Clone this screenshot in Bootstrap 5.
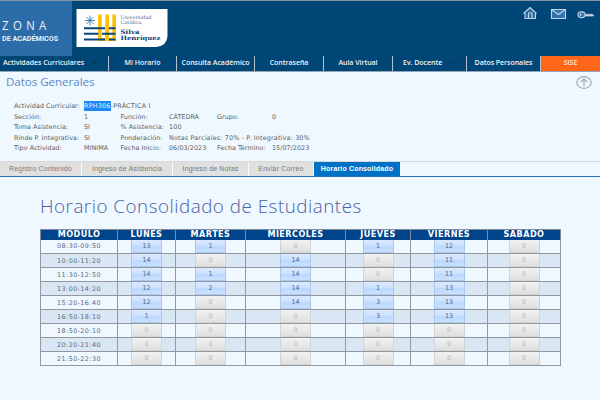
<!DOCTYPE html>
<html lang="es">
<head>
<meta charset="utf-8">
<meta name="viewport" content="width=device-width, initial-scale=1">
<title>Zona de Académicos</title>
<link href="https://cdn.jsdelivr.net/npm/bootstrap@5.3.0/dist/css/bootstrap.min.css" rel="stylesheet">
<style>
body{background:#eff7ff;font-family:"Open Sans","Noto Sans",sans-serif;width:600px;height:400px;overflow:hidden;line-height:1}
.topbar{height:56px;background:#004677;border-top:1px solid #8195a6}
.zona{width:72px;height:55px;background:#2c6ca8;color:#e9f2fa;padding:18px 0 0 2px}
.zona-a{font-size:12px;letter-spacing:4.6px;line-height:14px;white-space:nowrap;transform:scaleX(.95);transform-origin:0 0}
.zona-b{font-family:Roboto,sans-serif;font-weight:700;font-size:8px;line-height:9px;margin-top:1px;white-space:nowrap;transform:scaleX(.9);transform-origin:0 0}
.crest{margin:8px 0 0 4px;width:92px;height:38px}
.tools{padding:5px 5px 0 0}
.menu{height:16px;background:#004677;border-bottom:1px solid #93a5b6;display:grid;grid-template-columns:109px 68px 78px 69px 69px 74px 74px 59px;font-size:7px;font-weight:600;letter-spacing:-.03px}
.menu a{color:#eef4f9;text-decoration:none;white-space:nowrap;border-right:1px solid #b5c2ce;padding-bottom:2px}
.menu a.sise{background:#ff661a;border:0;color:#ffe9dc}
.menu a.m1{padding-left:3px}
.menu a.m6{padding-left:10px}
.tri{width:0;height:0;border:2px solid transparent;border-top:2px solid #1f2c38;border-bottom:0;margin-right:11px}
.sec{height:28px;padding:0 8px 0 6px;color:#5a8cc6}
.sec h2{font-size:11.6px;font-weight:400;letter-spacing:-.05px;margin:3px 0 0;line-height:14px}
.info{height:61px;padding:1px 0 0 14px;font-family:"DejaVu Sans",sans-serif;font-size:6.4px;letter-spacing:.04px;color:#5b5f66;display:grid;grid-template-columns:70px 36.5px 48.5px 48px 55px 1fr;grid-auto-rows:10.5px;align-items:center;white-space:nowrap;align-content:start}
.info .w5{grid-column:span 5;letter-spacing:.22px}.info .w3{grid-column:span 3;letter-spacing:.17px}
.sel{background:#1e88f5;color:#e4f2ff;padding:1px 0}
.tabs{height:16px;border-bottom:1px solid #2f6fc0;border-top:1px solid #d5d9dc;font-family:"Liberation Sans",sans-serif;font-size:7px;color:#7b7b7b;letter-spacing:.16px}
.tabs div{background:#e0e0e0;border-right:1px solid #f8fbff;white-space:nowrap;height:14px;line-height:14px}
.tabs .on{background:#0072c6;color:#fff;font-weight:700;border:0}
.t1{width:82px}.t2{width:91px}.t3{width:76px}.t4{width:65px}.t5{width:86px}
.ttl{font-size:18px;font-weight:300;color:#4a62a3;letter-spacing:.5px;margin:17px 0 0 40px;line-height:24px;white-space:nowrap;transform:scaleX(1.043);transform-origin:0 0}
.sched{margin:11px 0 0 40px;width:520px;border-collapse:collapse;table-layout:fixed;font-family:"DejaVu Sans",sans-serif;font-size:6.4px;color:#5d6a7c;text-align:center}
.sched th{background:#00458c;color:#fff;font-weight:700;font-size:8.1px;height:10px;padding:0;line-height:9px;border:1px solid #7f8b99;border-width:1px 1px 0;letter-spacing:.45px}
.sched td{height:14px;padding:0;border:1px solid #9298a0;line-height:12px;vertical-align:middle}
.sched tr.alt td{background:#d9e7f4}
.sched td:first-child{letter-spacing:.43px}
.sched tr.r1 td{border-top-width:0}
.cell{width:31px;height:13px;line-height:12px;margin:0 auto;background:linear-gradient(#dbe9ff,#cde2ff 45%,#bcd8fe 55%,#cbe1ff);border:1px solid #a9c6ee;border-top:0;color:#52698b}
.cell.z{background:linear-gradient(#f1f1f1,#e9e9e9 50%,#dfdfdf);border-color:#d4d4d4;color:#b4b4b4}
</style>
<script src="https://cdn.jsdelivr.net/npm/bootstrap@5.3.0/dist/js/bootstrap.bundle.min.js"></script>
</head>
<body>
<header class="topbar d-flex">
  <div class="zona"><div class="zona-a">ZONA</div><div class="zona-b">DE ACADÉMICOS</div></div>
  <svg class="crest" viewBox="0 0 92 38">
    <path d="M.5 0H91.500V27Q91 37 80 38H.5Z" fill="#fff"/>
    <g fill="#fcc20a"><path d="M22 5.500h3.700v24H22zM29.300 5.500H33v24h-3.700zM36.300 5.500H40v24h-3.700z"/><path d="M22 29h18v3H22z"/></g>
    <g fill="#08457e"><path d="M8 18.300h21v2H8zM33 18.300h6.500v2H33zM8 23.800h14.500v2H8zM26 23.800h13.500v2H26zM8 29.500h21v2H8zM33 29.500h6.500v2H33z"/></g>
    <path d="M14 6.500v10M9 11.500h10M10.500 8l7 7M17.500 8l-7 7" stroke="#3c76a6" stroke-width=".9"/>
    <g font-family="DejaVu Serif,serif" fill="#3b6a93"><text x="44.500" y="9.700" font-size="4.900" textLength="31" lengthAdjust="spacingAndGlyphs">Universidad</text><text x="44.500" y="14.600" font-size="4.900" textLength="21" lengthAdjust="spacingAndGlyphs">Católica</text>
    <g font-weight="bold" fill="#0b3c6c"><text x="44.500" y="25.300" font-size="6" textLength="19" lengthAdjust="spacingAndGlyphs">Silva</text><text x="44.500" y="31" font-size="6" textLength="40" lengthAdjust="spacingAndGlyphs">Henríquez</text></g></g>
  </svg>
  <div class="tools d-flex ms-auto">
    <svg width="77" height="18" viewBox="518 6 77 18" fill="none" stroke="#c3d3e2" stroke-width="1.100">
      <path d="M523.500 13.500L530 7.500L536.500 13.500M525 12.500V18.500H535.500V12.500" fill="#2f6fa8"/><path d="M528.500 18V13H532V18" />
      <path d="M551.500 9.500H565.500V18.500H551.500Z" fill="#3274ae"/><path d="M551.500 9.500L558.500 14.500L565.500 9.500"/>
      <ellipse cx="581.500" cy="14.800" rx="3.500" ry="2.900" fill="#3274ae"/><path d="M585 14.300H592L594 15.500L592.500 16H585" fill="#c3d3e2" stroke-width=".7"/><circle cx="580.500" cy="14.800" r=".5"/>
    </svg>
  </div>
</header>
<nav class="menu">
  <a href="#" class="m1 d-flex align-items-center">Actividades Curriculares<i class="tri ms-auto"></i></a>
  <a href="#" class="d-flex align-items-center justify-content-center">Mi Horario</a>
  <a href="#" class="d-flex align-items-center justify-content-center">Consulta Académico</a>
  <a href="#" class="d-flex align-items-center justify-content-center">Contraseña</a>
  <a href="#" class="d-flex align-items-center justify-content-center">Aula Virtual</a>
  <a href="#" class="m6 d-flex align-items-center">Ev. Docente<i class="tri ms-auto"></i></a>
  <a href="#" class="d-flex align-items-center justify-content-center">Datos Personales</a>
  <a href="#" class="sise d-flex align-items-center justify-content-center">SISE</a>
</nav>
<section class="sec d-flex justify-content-between align-items-start">
  <h2>Datos Generales</h2>
  <svg class="mt-1" width="16" height="13" viewBox="0 0 16 13" fill="none" stroke="#a5a9ad" stroke-width="1.200"><ellipse cx="8" cy="6.500" rx="7.200" ry="5.800"/><path d="M8 10V3M4.800 6L8 3L11.200 6"/></svg>
</section>
<section class="info">
  <span>Actividad Curricular:</span><span class="w5"><span class="sel">RPH306</span>-PRÁCTICA I</span>
  <span>Sección:</span><span>1</span><span>Función:</span><span>CÁTEDRA</span><span>Grupo:</span><span>0</span>
  <span>Toma Asistencia:</span><span>SI</span><span>% Asistencia:</span><span class="w3">100</span>
  <span>Rinde P. Integrativa:</span><span>SI</span><span>Ponderación:</span><span class="w3">Notas Parciales: 70% - P. Integrativa: 30%</span>
  <span>Tipo Actividad:</span><span>MINIMA</span><span>Fecha Inicio:</span><span>06/03/2023</span><span>Fecha Término:</span><span>15/07/2023</span>
</section>
<div class="tabs d-flex text-center align-items-stretch">
  <div class="t1">Registro Contenido</div><div class="t2">Ingreso de Asistencia</div><div class="t3">Ingreso de Notas</div><div class="t4">Enviar Correo</div><div class="t5 on">Horario Consolidado</div>
</div>
<h1 class="ttl">Horario Consolidado de Estudiantes</h1>
<table class="sched">
  <colgroup><col style="width:77px"><col style="width:58px"><col style="width:70px"><col style="width:100px"><col style="width:65px"><col style="width:77px"><col style="width:73px"></colgroup>
  <thead><tr><th>MODULO</th><th>LUNES</th><th>MARTES</th><th>MIERCOLES</th><th>JUEVES</th><th>VIERNES</th><th>SABADO</th></tr></thead>
  <tbody id="rows"></tbody>
</table>
<script>
const data=[["08:30-09:50",13,1,0,1,12,0],["10:00-11:20",14,0,14,0,11,0],["11:30-12:50",14,1,14,0,11,0],["13:00-14:20",12,2,14,1,13,0],["15:20-16:40",12,0,14,3,13,0],["16:50-18:10",1,0,0,3,13,0],["18:50-20:10",0,0,0,0,0,0],["20:20-21:40",0,0,0,0,0,0],["21:50-22:30",0,0,0,0,0,0]];
document.getElementById("rows").innerHTML=data.map((r,i)=>`<tr class="${i%2?"alt":""}${i?"":"r1"}">`+r.map((v,j)=>j?`<td><div class="cell${v?"":" z"}">${v}</div></td>`:`<td>${v}</td>`).join("")+"</tr>").join("");
</script>
</body>
</html>
